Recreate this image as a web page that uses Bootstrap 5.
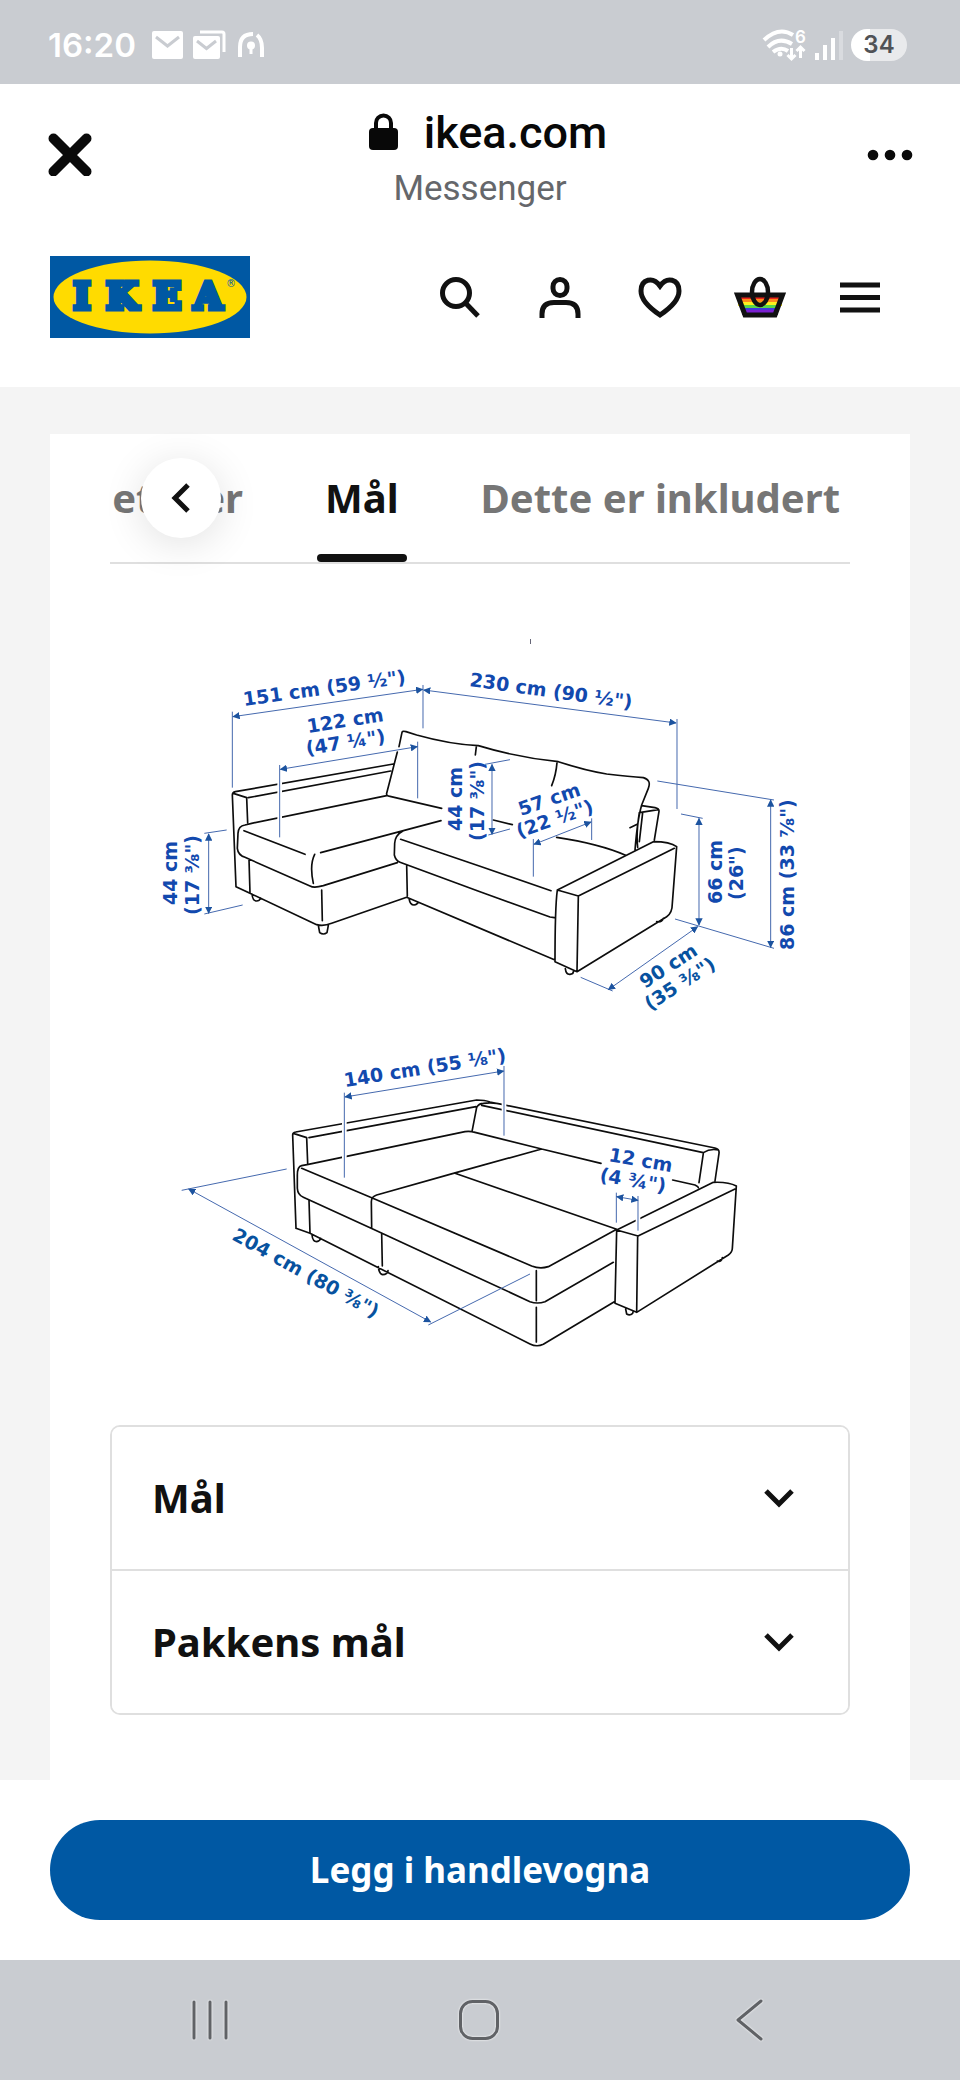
<!DOCTYPE html>
<html lang="nb">
<head>
<meta charset="utf-8">
<meta name="viewport" content="width=device-width, initial-scale=1">
<title>IKEA – Mål</title>
<link href="https://cdn.jsdelivr.net/npm/bootstrap@5.3.0/dist/css/bootstrap.min.css" rel="stylesheet">
<style>
  :root { --ikea-blue: #0058a3; --ink: #111; --system: #c9ccd1; --hairline: #dfdfdf; }
  body { font-family: "Noto Sans", sans-serif; color: var(--ink); background: #fff; }
  svg { display: block; flex: none; }
  button { color: inherit; }

  .system-bar { background: var(--system); }
  .status-bar { height: 84px; padding: 5px 53px 0 48px; color: #fff; font-family: Inter, sans-serif; }
  .clock { font-size: 33px; line-height: 40px; font-weight: 600; }
  .battery { width: 56px; height: 32px; border-radius: 16px; font-size: 24px; line-height: 32px; font-weight: 600; color: #505256;
    background: linear-gradient(90deg, #fff 34%, #e9eaec 34%); }

  .browser-bar { height: 123px; padding: 0 40px; font-family: Roboto, sans-serif; color: #080808; }
  .browser-bar .titles { padding-top: 24px; }
  .browser-bar .site { font-size: 45px; line-height: 52px; font-weight: 500; }
  .browser-bar .source { font-size: 35px; line-height: 40px; margin-top: 10px; color: #65676b; }
  .bare { border: 0; background: none; padding: 0; }

  .shop-header { height: 180px; padding: 0 50px; }
  .wordmark { font: 700 37px "DejaVu Serif", serif; text-anchor: middle; fill: var(--ikea-blue); stroke: var(--ikea-blue); stroke-width: 5; }
  .tool { width: 100px; height: 100px; display: flex; align-items: center; justify-content: center; }

  .page-area { background: #f4f4f4; padding: 47px 50px 0; }
  .sheet { background: #fff; padding: 0 60px 65px; }
  .tab-strip { height: 130px; border-bottom: 2px solid var(--hairline); gap: 82px; padding-right: 10px; }
  .tab-strip .nav-link { padding: 0; font-size: 40px; line-height: 128px; font-weight: 700; color: #767676; white-space: nowrap; position: relative; }
  .tab-strip .nav-link.active { color: var(--ink); }
  .tab-strip .nav-link.active::after { content: ""; position: absolute; left: -8px; right: -8px; bottom: 0; height: 8px; border-radius: 4px; background: var(--ink); }
  .scroll-back { position: absolute; left: 31px; top: 24px; width: 80px; height: 80px; border-radius: 50%; border: 0; background: #fff;
    box-shadow: 0 6px 40px rgba(0, 0, 0, .12); display: flex; align-items: center; justify-content: center; }

  .outline { fill: none; stroke: #0d0d0d; stroke-width: 5; stroke-linecap: round; stroke-linejoin: round; }
  .gap-line { fill: none; stroke: #fff; stroke-width: 14; }
  .measure { fill: none; stroke: #4468ae; stroke-width: 3; }
  .arrows path { marker-start: url(#tip); marker-end: url(#tip); }
  .labels { font: 700 19px "DejaVu Sans", sans-serif; fill: #1249ae; }
  .labels .deep { fill: #07529f; }

  .facts { --bs-accordion-border-color: #dfdfdf; --bs-accordion-border-width: 2px; --bs-accordion-border-radius: 10px; --bs-accordion-inner-border-radius: 8px;
    --bs-accordion-btn-padding-x: 40px; --bs-accordion-btn-padding-y: 0; --bs-accordion-btn-color: #111; }
  .facts .accordion-button { height: 142px; font-size: 40px; line-height: 56px; font-weight: 700; justify-content: space-between; }
  .facts .accordion-button::after { display: none; }

  .buy-bar { padding: 40px 50px; }
  .buy { height: 100px; border-radius: 50px; background: var(--ikea-blue); color: #fff; font-size: 35px; line-height: 48px; font-weight: 700; }
  .buy:hover { background: #004f93; color: #fff; }
  .nav-keys { height: 120px; padding: 0 76px; }
  .nav-keys svg { filter: drop-shadow(0 0 1px #fff); }
</style>
</head>
<body>

<div class="system-bar status-bar d-flex align-items-center justify-content-between">
  <div class="d-flex align-items-center">
    <span class="clock">16:20</span>
    <svg class="ms-2 ps-1" width="120" height="32" viewBox="149 29 114 32" fill="#fff" aria-hidden="true">
      <rect x="152" y="31" width="31" height="28" rx="2"/>
      <path d="M156 37l11.500 9 11.500-9" fill="none" stroke="#c9ccd1" stroke-width="3"/>
      <path d="M200 32h22a2 2 0 0 1 2 2v18" fill="none" stroke="#fff" stroke-width="3"/>
      <rect x="193" y="36" width="27" height="23" rx="2"/>
      <path d="M197 41l9.500 7.500 9.500-7.500" fill="none" stroke="#c9ccd1" stroke-width="3"/>
      <path d="M240 57V47q0-13 13-13M257 35q5 4 5 13v9" fill="none" stroke="#fff" stroke-width="4"/>
      <circle cx="251" cy="45.500" r="4"/><path d="M249.500 47h3v7h-3z"/>
    </svg>
  </div>
  <div class="d-flex align-items-center">
    <svg width="82" height="36" viewBox="758 26 82 36" fill="none" stroke="#fff" stroke-width="4" aria-hidden="true">
      <path d="M761 39q15-14 29-5M765 46q11-11 24-3M770 51q8-6 15-1"/>
      <circle cx="777" cy="53" r="2.500" fill="#fff" stroke="none"/>
      <path d="M788.500 47v10M784.500 54l4 4 4-4M797.500 57V47M793.500 50l4-4 4 4" stroke-width="3"/>
      <text x="792" y="42" font-size="17" font-weight="600" fill="#fff" stroke="none">6</text>
      <path d="M814 52v7M822 44v15M830 37v22"/><path d="M838 30v29" opacity=".3"/>
    </svg>
    <span class="battery ms-2 text-center">34</span>
  </div>
</div>

<div class="browser-bar d-flex align-items-center justify-content-between">
  <button class="bare" type="button" aria-label="Lukk">
    <svg width="60" height="60" viewBox="0 0 60 60" stroke="#0a0a0a" stroke-width="10" stroke-linecap="round"><path d="M13.500 22.500l33 33M46.500 22.500l-33 33"/></svg>
  </button>
  <div class="titles text-center">
    <div class="site d-flex align-items-center justify-content-center ms-3">
      <svg width="55" height="44" viewBox="0 0 55 44" fill="#080808"><rect x="0" y="17" width="29" height="22" rx="4"/><path d="M7 18V12a7.500 7.500 0 0 1 15 0v6" fill="none" stroke="#080808" stroke-width="4"/></svg>
      <span>ikea.com</span>
    </div>
    <div class="source">Messenger</div>
  </div>
  <button class="bare" type="button" aria-label="Mer">
    <svg width="60" height="60" viewBox="0 0 60 60" fill="#0a0a0a"><circle cx="13" cy="39" r="5.300"/><circle cx="30" cy="39" r="5.300"/><circle cx="47" cy="39" r="5.300"/></svg>
  </button>
</div>

<header class="shop-header d-flex align-items-center justify-content-between">
  <a href="#" aria-label="IKEA">
    <svg width="200" height="82" viewBox="0 0 200 82">
      <path fill="#0058a3" d="M0 0h200v82H0z"/>
      <ellipse cx="100" cy="41" rx="96.500" ry="36.500" fill="#ffdb00"/>
      <text class="wordmark" y="53"><tspan x="32">I</tspan><tspan x="72">K</tspan><tspan x="117">E</tspan><tspan x="158">A</tspan></text>
      <text x="176" y="31" font-family="DejaVu Sans, sans-serif" font-size="10" fill="#0058a3">®</text>
    </svg>
  </a>
  <nav class="d-flex" aria-label="Verktøy">
    <button class="bare tool" type="button" aria-label="Søk">
      <svg width="60" height="60" viewBox="0 0 60 60" fill="none" stroke="#111" stroke-width="5"><circle cx="26" cy="26" r="13.500"/><path d="M35.500 36L48 49"/></svg>
    </button>
    <a class="tool" href="#" aria-label="Profil">
      <svg width="60" height="60" viewBox="0 0 60 60" fill="none" stroke="#111" stroke-width="5"><rect x="23" y="12.500" width="14" height="16" rx="7"/><path d="M12 51V47Q12 35.500 24 35.500H36Q48 35.500 48 47V51"/></svg>
    </a>
    <a class="tool" href="#" aria-label="Favoritter">
      <svg width="60" height="60" viewBox="0 0 60 60" fill="none" stroke="#111" stroke-width="5"><path d="M30 48C18 40 11 32 11 24C11 12 23 9 30 19C37 9 49 12 49 24C49 32 42 40 30 48Z"/></svg>
    </a>
    <a class="tool" href="#" aria-label="Handlevogn">
      <svg width="60" height="60" viewBox="0 0 60 60" fill="none">
        <path fill="#e8251a" d="M8 28h44v5H8z"/><path fill="#ff8a1c" d="M8 32h44v4H8z"/><path fill="#fff01e" d="M8 35h44v4H8z"/><path fill="#58d64a" d="M10 38h40v3H10z"/><path fill="#3f38e0" d="M11 41h38v2H11z"/><path fill="#7a1fd0" d="M12 43h36v5H12z"/>
        <path d="M7.500 28h45L45 48H15z" stroke="#111" stroke-width="5"/>
        <ellipse cx="30" cy="25" rx="8" ry="13" stroke="#111" stroke-width="4.500"/>
      </svg>
    </a>
    <button class="bare tool" type="button" aria-label="Meny">
      <svg width="60" height="60" viewBox="0 0 60 60" stroke="#111" stroke-width="5"><path d="M10 18h40M10 30.500h40M10 43h40"/></svg>
    </button>
  </nav>
</header>

<main class="page-area">
  <section class="sheet">
    <div class="position-relative">
      <nav class="nav tab-strip flex-nowrap justify-content-end">
        <a class="nav-link" href="#">etaljer</a>
        <a class="nav-link active" href="#" aria-current="page">Mål</a>
        <a class="nav-link" href="#">Dette er inkludert</a>
      </nav>
      <button class="scroll-back" type="button" aria-label="Forrige">
        <svg width="28" height="32" viewBox="0 0 28 32" fill="none" stroke="#111" stroke-width="5"><path d="M21 3L8 16l13 13"/></svg>
      </button>
    </div>

    <svg class="w-100" viewBox="110 564 740 861" role="img" aria-label="Målskisse av sovesofa">
      <defs>
        <marker id="tip" markerUnits="userSpaceOnUse" markerWidth="24" markerHeight="22" refX="20" refY="11" orient="auto-start-reverse"><path d="M0 0L22 11L0 22Z" fill="#1c539f"/></marker>
      </defs>
      <path d="M530.500 639v5" stroke="#667" stroke-width="1"/>

      <!-- sofa with chaise -->
      <g transform="translate(150 620) scale(.333333)">
        <path class="outline" d="M258 800L247 525Q247 517 256 515L730 432M295 533L722 453M250 520L290 533L293 608M258 800L300 820L297 718M258 800L500 914Q520 920 545 910L770 832L1215 1020
          M306 822Q308 842 318 843Q328 844 332 834M505 916L509 938Q520 946 531 938L535 916M777 835Q780 855 792 855Q802 854 804 846
          M710 527L305 610L285 615Q265 618 264 640L262 685Q264 705 285 712L480 798Q492 805 520 797L742 728M282 632L465 703M512 698L873 602M494 703Q478 735 490 790M515 810L517 902
          M742 396L710 520Q708 528 720 529L875 565M747 380L756 337Q757 332 768 335L800 345Q900 373 985 377Q1100 412 1225 425Q1300 450 1370 462Q1440 470 1480 473Q1505 480 1495 505L1475 555Q1462 600 1455 690
          M979 380L976 405M1221 428Q1218 465 1205 497
          M760 632Q735 645 734 670L733 705Q737 722 750 727L990 815L1200 891L1213 893M752 658L990 739L1203 812M770 735L772 828M1030 600L1087 614M1220 652Q1350 672 1425 705
          M1475 557L1515 563Q1528 566 1527 574L1513 660M1468 578L1525 569M1478 578L1468 665M1468 578Q1458 640 1463 682M1440 623L1463 612
          M1222 810L1510 665Q1560 665 1580 680L1567 850Q1567 880 1550 890L1281 1055L1215 1025Q1215 860 1222 810L1285 828L1573 685M1285 828L1281 1055
          M1246 1046Q1248 1064 1260 1063Q1270 1062 1270 1055M1520 905Q1535 908 1540 895"/>
        <path class="gap-line" d="M389 450V640"/>
        <g class="measure">
          <path d="M247 275V503M819 195V325M1581 297V567M389 435V652M803 365V535M163 640L230 630M163 882L278 855M1005 433L1080 419M1015 645L1080 627M1150 657V770M1325 595V660M1522 483L1872 540M1575 897L1872 985M1593 582L1658 595M1292 1072L1388 1113"/>
          <g class="arrows">
            <path d="M249 290L818 208"/><path d="M821 210L1578 309"/><path d="M391 448L802 380"/><path d="M176 642V880"/><path d="M1026 433V643"/><path d="M1152 673L1323 606"/><path d="M1862 540V982"/><path d="M1647 595V915"/><path d="M1375 1109L1643 920"/>
          </g>
        </g>
      </g>

      <!-- sofa folded out as a bed -->
      <g transform="translate(160 1020) scale(.333333)">
        <path class="outline" d="M408 625L398 345Q398 337 407 336L950 240Q975 240 990 246L1665 384Q1679 387 1677 400L1665 483M447 353L948 260M400 340L440 353L443 430M450 640L447 540
          M936 335L950 262Q957 250 970 250Q1000 246 1030 254M965 256L1630 398Q1650 385 1675 390M1630 400L1617 488
          M445 433L915 335Q930 333 945 337L1145 387M425 445L635 533L1115 738Q1140 748 1165 740L1370 628M445 433L425 437Q412 440 412 465L412 505Q413 525 430 532L640 628L1110 845Q1132 853 1155 845L1360 727
          M635 625L634 545Q634 530 650 525L880 460L1145 387L1323 430M885 460L1370 628M1538 480L1605 495Q1615 500 1615 503
          M408 625L450 640L1110 972Q1130 982 1150 973L1363 845M665 640L667 738M1129 752V842M1129 862V966
          M1370 630L1660 487Q1705 485 1729 498L1717 685Q1717 697 1705 705L1430 877L1365 850L1370 630L1434 648L1725 507M1433 648L1430 877
          M1397 867L1400 882Q1410 888 1418 880L1420 873M1672 723Q1685 727 1687 713M456 645Q458 665 470 665Q480 663 482 655M655 740Q657 762 668 764Q682 764 684 752"/>
        <path class="gap-line" d="M553 300V430M1032 240V290M1434 580V615"/>
        <g class="measure">
          <path d="M553 218V473M1032 138V347M65 511L380 447M805 915L1110 762M1369 518V608M1434 528V632"/>
          <g class="arrows"><path d="M555 231L1031 153"/><path d="M86 507L812 906"/><path d="M1370 530L1434 541"/></g>
        </g>
      </g>

      <g class="labels">
        <text transform="translate(244 706) rotate(-8)">151 cm (59 ½")</text>
        <text transform="translate(469 686) rotate(8)">230 cm (90 ½")</text>
        <text transform="translate(308 733) rotate(-9)">122 cm</text>
        <text transform="translate(307 755) rotate(-9)">(47 ¼")</text>
        <text transform="translate(177 905) rotate(-90)">44 cm</text>
        <text transform="translate(199 915) rotate(-90)">(17 ⅜")</text>
        <text transform="translate(462 831) rotate(-90)">44 cm</text>
        <text transform="translate(484 841) rotate(-90)">(17 ⅜")</text>
        <text transform="translate(521 816) rotate(-19)">57 cm</text>
        <text transform="translate(519 838) rotate(-19)">(22 ½")</text>
        <text transform="translate(722 904) rotate(-90)">66 cm</text>
        <text transform="translate(743 900) rotate(-90)">(26")</text>
        <text transform="translate(794 950) rotate(-90)">86 cm (33 ⅞")</text>
        <text class="deep" transform="translate(645 989) rotate(-33)">90 cm</text>
        <text class="deep" transform="translate(650 1011) rotate(-33)">(35 ⅜")</text>
        <text transform="translate(345 1087) rotate(-9)">140 cm (55 ⅛")</text>
        <text class="deep" transform="translate(231 1239) rotate(29)">204 cm (80 ⅜")</text>
        <text transform="translate(608 1161) rotate(10)">12 cm</text>
        <text transform="translate(599 1181) rotate(10)">(4 ¾")</text>
      </g>
    </svg>

    <div class="accordion facts" id="facts">
      <div class="accordion-item">
        <h2 class="accordion-header"><button class="accordion-button collapsed" type="button" aria-expanded="false">Mål
          <svg width="60" height="60" viewBox="0 0 60 60" fill="none" stroke="#111" stroke-width="5"><path d="M18 23l13 13 13-13"/></svg></button></h2>
      </div>
      <div class="accordion-item">
        <h2 class="accordion-header"><button class="accordion-button collapsed" type="button" aria-expanded="false">Pakkens mål
          <svg width="60" height="60" viewBox="0 0 60 60" fill="none" stroke="#111" stroke-width="5"><path d="M18 23l13 13 13-13"/></svg></button></h2>
      </div>
    </div>
  </section>
</main>

<div class="buy-bar"><button class="btn buy w-100" type="button">Legg i handlevogna</button></div>

<div class="system-bar nav-keys d-flex align-items-center">
  <button class="bare flex-fill d-flex justify-content-center" type="button" aria-label="Nylige"><svg width="44" height="44" viewBox="0 0 44 44" stroke="#606266" stroke-width="3" stroke-linecap="round"><path d="M5 4v36M21 4v36M37 4v36"/></svg></button>
  <button class="bare flex-fill d-flex justify-content-center" type="button" aria-label="Hjem"><svg width="44" height="44" viewBox="0 0 44 44" fill="none" stroke="#606266" stroke-width="3"><rect x="2.500" y="3.500" width="37" height="37" rx="12"/></svg></button>
  <button class="bare flex-fill d-flex justify-content-center" type="button" aria-label="Tilbake"><svg width="44" height="44" viewBox="0 0 44 44" fill="none" stroke="#606266" stroke-width="3" stroke-linecap="round" stroke-linejoin="round"><path d="M34 3L11 22l23 19"/></svg></button>
</div>

<script src="https://cdn.jsdelivr.net/npm/bootstrap@5.3.0/dist/js/bootstrap.bundle.min.js"></script>
</body>
</html>
